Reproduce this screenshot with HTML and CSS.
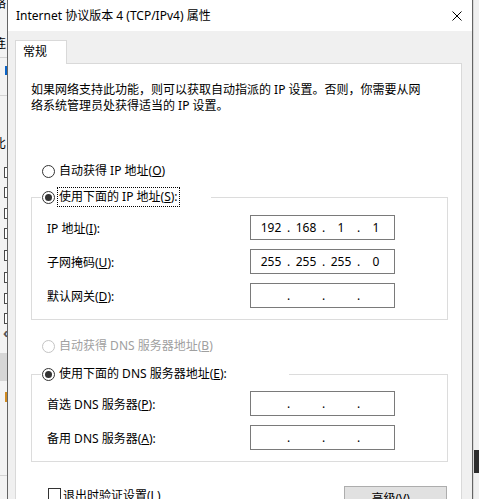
FILE: index.html
```html
<!DOCTYPE html>
<html lang="zh-CN">
<head>
    <meta charset="UTF-8">
    <title>Internet 协议版本 4 (TCP/IPv4) 属性</title>
    <link rel="stylesheet" href="styles.css">
</head>
<body>
    <div class="desktop">
        <!-- window behind the dialog, only its right edge shows -->
        <div class="behind">
            <span class="bg-char c-top">络</span>
            <span class="bg-char c-lian">连</span>
            <span class="bg-line l1"></span>
            <span class="bg-mark blue"></span>
            <span class="bg-line l2"></span>
            <span class="bg-char c-bi">比</span>
            <span class="bg-box b1"></span>
            <span class="bg-box b2"></span>
            <span class="bg-box b3"></span>
            <span class="bg-box b4"></span>
            <span class="bg-box b5"></span>
            <span class="bg-box b6"></span>
            <span class="bg-box b7"></span>
            <span class="bg-box b8"></span>
            <span class="bg-chev">‹</span>
            <span class="bg-block"></span>
            <span class="bg-mark orange"></span>
            <span class="bg-line l3"></span>
        </div>
        <div class="behind-right">
            <span class="bg-dark"></span>
        </div>

        <div class="dialog">
            <div class="titlebar">
                <span class="title">Internet 协议版本 4 (TCP/IPv4) 属性</span>
                <svg class="close" width="10" height="10" viewBox="0 0 10 10">
                    <path d="M0.5 0.5 L9.5 9.5 M9.5 0.5 L0.5 9.5" stroke="#000" stroke-width="1" fill="none"/>
                </svg>
            </div>

            <div class="dialog-body">
                <div class="tabs">
                    <div class="tab">常规</div>
                </div>

                <div class="panel">
                    <p class="intro">如果网络支持此功能，则可以获取自动指派的 IP 设置。否则，你需要从网<br>络系统管理员处获得适当的 IP 设置。</p>

                    <div class="radio first">
                        <span class="circle"></span>
                        <span class="radio-text">自动获得 IP 地址(<u>O</u>)</span>
                    </div>

                    <fieldset class="group group-ip">
                        <legend>
                            <span class="circle checked"></span>
                            <span class="radio-text focus">使用下面的 IP 地址(<u>S</u>):</span>
                        </legend>
                        <div class="fields">
                            <div class="row">
                                <span>IP 地址(<u>I</u>):</span>
                                <div class="ip">
                                    <span>192</span><i>.</i><span>168</span><i>.</i><span>1</span><i>.</i><span>1</span>
                                </div>
                            </div>
                            <div class="row">
                                <span>子网掩码(<u>U</u>):</span>
                                <div class="ip">
                                    <span>255</span><i>.</i><span>255</span><i>.</i><span>255</span><i>.</i><span>0</span>
                                </div>
                            </div>
                            <div class="row">
                                <span>默认网关(<u>D</u>):</span>
                                <div class="ip">
                                    <span></span><i>.</i><span></span><i>.</i><span></span><i>.</i><span></span>
                                </div>
                            </div>
                        </div>
                    </fieldset>

                    <div class="radio disabled">
                        <span class="circle"></span>
                        <span class="radio-text">自动获得 DNS 服务器地址(<u>B</u>)</span>
                    </div>

                    <fieldset class="group group-dns">
                        <legend>
                            <span class="circle checked"></span>
                            <span class="radio-text">使用下面的 DNS 服务器地址(<u>E</u>):</span>
                        </legend>
                        <div class="fields">
                            <div class="row">
                                <span>首选 DNS 服务器(<u>P</u>):</span>
                                <div class="ip">
                                    <span></span><i>.</i><span></span><i>.</i><span></span><i>.</i><span></span>
                                </div>
                            </div>
                            <div class="row">
                                <span>备用 DNS 服务器(<u>A</u>):</span>
                                <div class="ip">
                                    <span></span><i>.</i><span></span><i>.</i><span></span><i>.</i><span></span>
                                </div>
                            </div>
                        </div>
                    </fieldset>

                    <div class="footer">
                        <div class="check">
                            <span class="box"></span>
                            <span>退出时验证设置(<u>L</u>)</span>
                        </div>
                        <button class="btn">高级(<u>V</u>)...</button>
                    </div>
                </div>
            </div>
        </div>
    </div>
</body>
</html>
```

FILE: styles.css
```css
/* Reset */
* {
    margin: 0;
    padding: 0;
    box-sizing: border-box;
}

body {
    margin: 0;
    width: 479px;
    height: 499px;
    overflow: hidden;
    background-color: #f0f0f0;
    font-family: "Noto Sans", "Noto Sans CJK SC", sans-serif;
    font-size: 12px;
    color: #000;
}

.desktop {
    position: relative;
    width: 479px;
    height: 499px;
    overflow: hidden;
    background-color: #f0f0f0;
}

/* Window behind the dialog */
.behind {
    position: absolute;
    left: 0;
    top: 0;
    width: 8px;
    height: 499px;
    overflow: hidden;
    background-color: #f3f3f3;
}

.bg-char {
    position: absolute;
    left: -6px;
    font-family: "Noto Sans CJK SC", sans-serif;
    font-size: 12px;
    line-height: 12px;
}

.c-top { top: -3px; }
.c-lian { top: 37px; }
.c-bi { top: 137px; }

.bg-line {
    position: absolute;
    left: 0;
    width: 7px;
    height: 1px;
    background-color: #d4d4d4;
}

.l1 { top: 57px; }
.l2 { top: 95px; }
.l3 { top: 475px; }

.bg-mark {
    position: absolute;
    left: 5px;
    width: 2px;
}

.bg-mark.blue { top: 66px; height: 9px; background-color: #0a64c8; }
.bg-mark.orange { top: 392px; height: 10px; background-color: #d08a20; }

.bg-box {
    position: absolute;
    left: 4px;
    width: 10px;
    height: 11px;
    border: 1px solid #4a4a4a;
    background-color: #fff;
}

.b1 { top: 167px; }
.b2 { top: 187px; }
.b3 { top: 208px; }
.b4 { top: 228px; }
.b5 { top: 250px; }
.b6 { top: 272px; }
.b7 { top: 293px; }
.b8 { top: 313px; }

.bg-chev {
    position: absolute;
    left: 3px;
    top: 323px;
    font-size: 14px;
    font-weight: bold;
    color: #555;
}

.bg-block {
    position: absolute;
    left: 0;
    top: 353px;
    width: 7px;
    height: 28px;
    background-color: #d6d6d6;
}

.behind-right {
    position: absolute;
    left: 472px;
    top: 0;
    width: 7px;
    height: 499px;
    background-color: #f0f0f0;
    border-left: 2px solid #d8d8d8;
}

.bg-dark {
    position: absolute;
    left: 0;
    top: 450px;
    width: 7px;
    height: 23px;
    background-color: #2d2d2d;
}

/* Dialog window */
.dialog {
    position: absolute;
    left: 7px;
    top: -1px;
    width: 466px;
    height: 540px;
    border: 1px solid #646464;
    background-color: #f0f0f0;
}

.titlebar {
    display: flex;
    align-items: center;
    justify-content: space-between;
    height: 31px;
    padding: 0 10px 0 8px;
    background-color: #fff;
}

.title {
    line-height: 16px;
}

.dialog-body {
    padding: 9px 10px 0 7px;
}

/* Tab strip */
.tabs {
    display: flex;
}

.tab {
    position: relative;
    z-index: 1;
    width: 52px;
    height: 24px;
    margin-bottom: -1px;
    padding-left: 7px;
    line-height: 22px;
    background-color: #fff;
    border: 1px solid #d9d9d9;
    border-bottom: none;
}

.panel {
    height: 480px;
    padding: 0 13px 0 15px;
    background-color: #fff;
    border: 1px solid #d9d9d9;
}

.intro {
    margin-top: 18px;
    line-height: 16px;
    white-space: nowrap;
}

/* Radio buttons */
.radio {
    display: flex;
    align-items: center;
    height: 20px;
    margin-left: 11px;
}

.radio.first {
    margin-top: 47px;
}

.radio.disabled {
    margin-top: 16px;
    color: #a0a0a0;
}

.circle {
    position: relative;
    flex: none;
    width: 13px;
    height: 13px;
    border: 1px solid #333;
    border-radius: 50%;
    background-color: #fff;
}

.radio.disabled .circle {
    border-color: #c4c4c4;
}

.circle.checked::after {
    content: "";
    position: absolute;
    left: 2px;
    top: 2px;
    width: 7px;
    height: 7px;
    border-radius: 50%;
    background-color: #333;
}

.radio-text {
    margin-left: 4px;
    line-height: 18px;
    white-space: nowrap;
}

.radio-text.focus {
    margin-left: 2px;
    padding: 0 1px;
    border: 1px dotted #000;
}

/* Group boxes */
.group {
    margin: 6px 0 0;
    padding: 8px 0 11px;
    min-width: 0;
    border: 1px solid #dcdcdc;
}

.group legend {
    display: flex;
    align-items: center;
    height: 20px;
    margin-left: 9px;
    padding-left: 1px;
}

.group-ip legend {
    width: 170px;
}

.group-dns {
    margin-top: 8px;
    padding-top: 7px;
}

.group-dns legend {
    width: 248px;
}

.fields {
    display: grid;
    row-gap: 9px;
    padding-left: 15px;
}

.row {
    display: grid;
    grid-template-columns: 203px 145px;
    align-items: center;
    height: 25px;
    white-space: nowrap;
}

/* IP address field */
.ip {
    display: grid;
    grid-template-columns: 30px 5px 30px 5px 30px 5px 30px;
    height: 25px;
    padding-left: 5px;
    line-height: 23px;
    border: 1px solid #7a7a7a;
    background-color: #fff;
}

.ip span {
    text-align: center;
}

.ip i {
    font-style: normal;
    text-align: center;
}

/* Footer row */
.footer {
    display: flex;
    justify-content: space-between;
    align-items: flex-start;
    margin-top: 24px;
    margin-right: 1px;
}

.check {
    display: flex;
    align-items: center;
    height: 13px;
    margin-top: 2px;
    margin-left: 17px;
}

.box {
    width: 13px;
    height: 13px;
    margin-right: 2px;
    border: 1px solid #333;
    background-color: #fff;
}

.btn {
    width: 103px;
    height: 23px;
    font-family: inherit;
    font-size: 12px;
    color: #000;
    background-color: #e1e1e1;
    border: 1px solid #adadad;
}
```
